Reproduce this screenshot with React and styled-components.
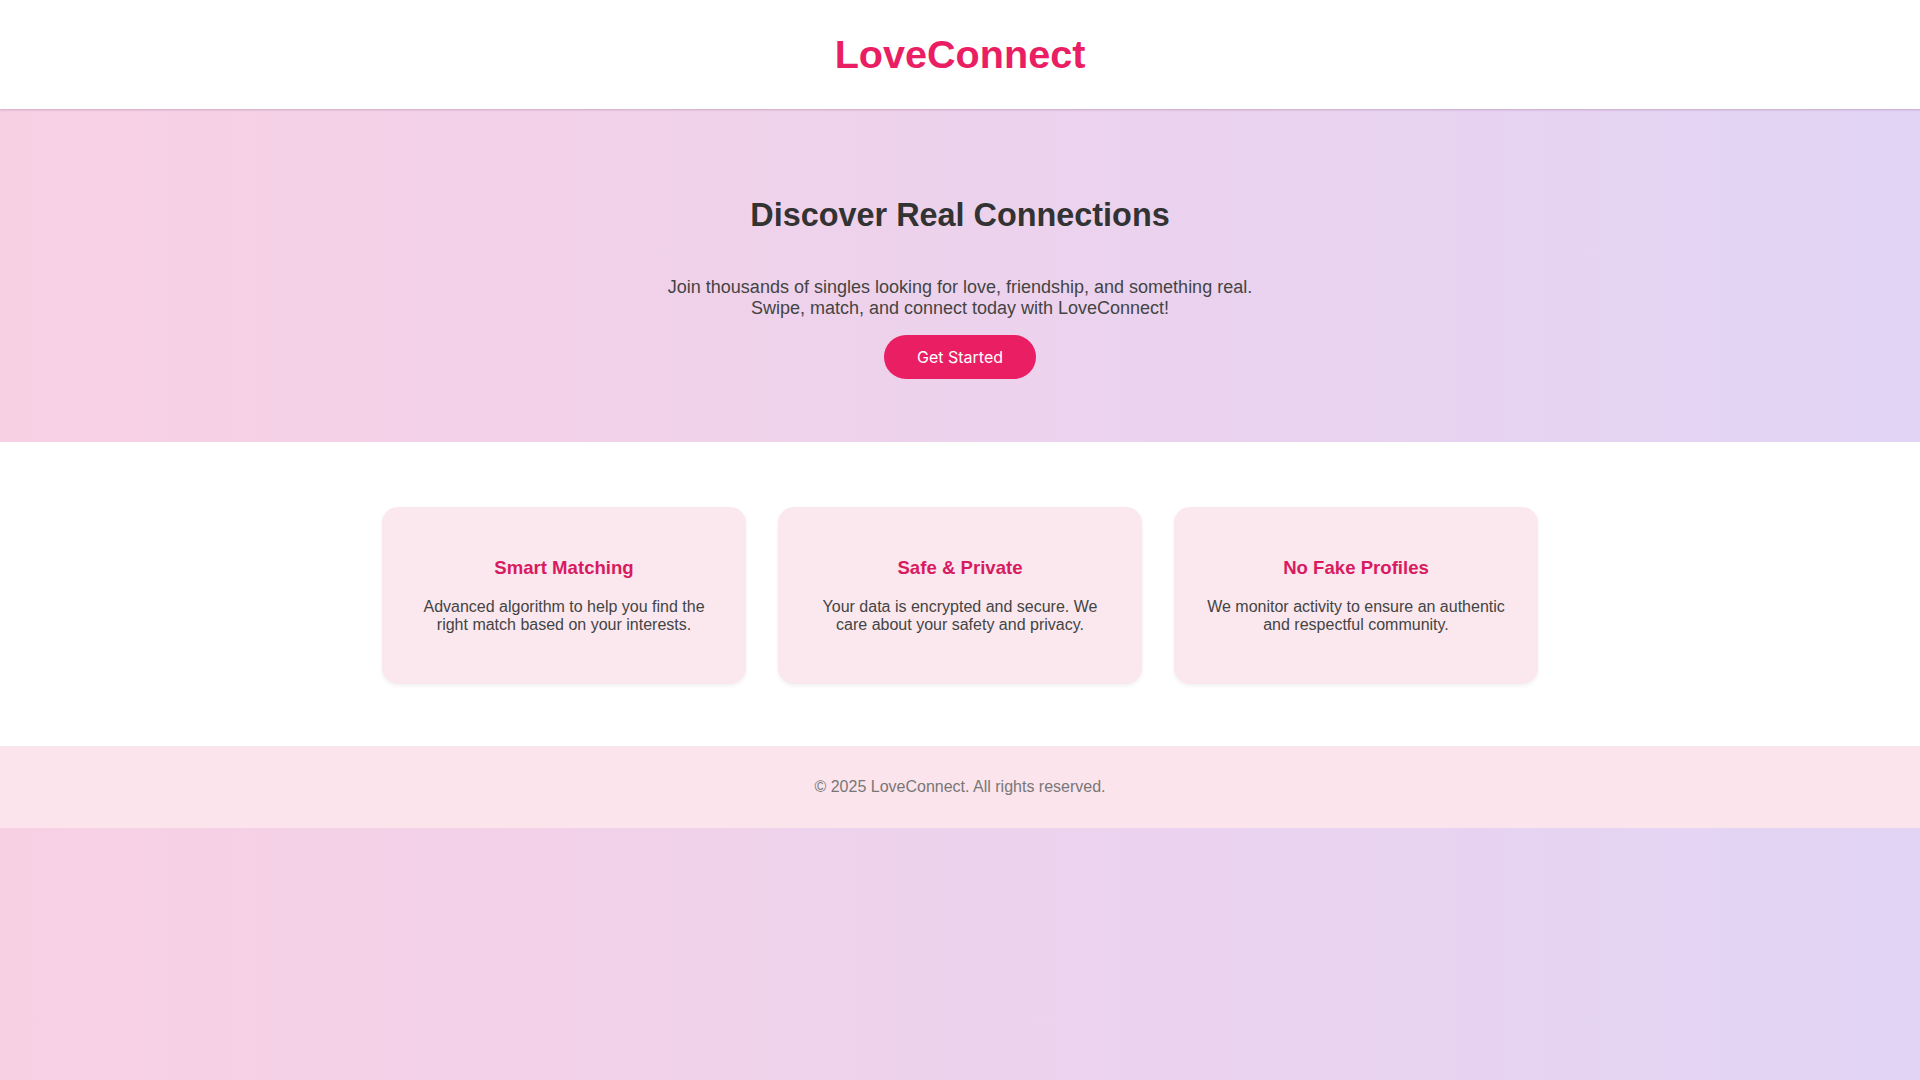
import React from 'react';
import styled, { createGlobalStyle } from 'styled-components';

const GlobalStyle = createGlobalStyle`
  html, body {
    margin: 0;
    padding: 0;
  }
  body {
    min-height: 100vh;
    font-family: "Liberation Sans", Arial, sans-serif;
    color: #333;
    background: linear-gradient(to right, #f8d0e4, #e2d4f5);
  }
`;

const Header = styled.header`
  background: #ffffff;
  padding: 31px 20px 32px;
  text-align: center;
  box-shadow: 0 1px 2px rgba(150, 90, 130, 0.35);
  position: relative;
  z-index: 1;
`;

const Logo = styled.h1`
  margin: 0;
  font-size: 39.6px;
  line-height: 46px;
  font-weight: 700;
  color: #e91e63;
`;

const Hero = styled.section`
  padding: 88px 20px 63px;
  text-align: center;
`;

const HeroTitle = styled.h2`
  margin: 0;
  font-size: 32.4px;
  line-height: 37px;
  font-weight: 700;
  color: #333;
`;

const HeroText = styled.p`
  max-width: 600px;
  margin: 43px auto 16px;
  font-size: 18px;
  line-height: 21px;
  color: #444;
`;

const PrimaryButton = styled.button`
  font-family: Inter, "Noto Sans", sans-serif;
  font-size: 16px;
  line-height: 20px;
  color: #fff;
  background: #e91e63;
  border: none;
  border-radius: 30px;
  padding: 12px 33px;
  cursor: pointer;
`;

const Features = styled.section`
  background: #ffffff;
  padding: 65px 20px 62px;
`;

const FeatureGrid = styled.div`
  max-width: 1156px;
  margin: 0 auto;
  display: grid;
  grid-template-columns: repeat(3, 1fr);
  gap: 32px;
`;

const FeatureCard = styled.div`
  background: #fae8ee;
  border-radius: 16px;
  padding: 50px 32px 49px;
  text-align: center;
  box-shadow: 0 2px 4px rgba(0, 0, 0, 0.06);
`;

const FeatureTitle = styled.h3`
  margin: 0 0 19px;
  font-size: 18.6px;
  line-height: 22px;
  font-weight: 700;
  color: #d81b60;
`;

const FeatureText = styled.p`
  margin: 0;
  font-size: 16px;
  line-height: 18.4px;
  color: #444;
`;

const Footer = styled.footer`
  background: #fce4ec;
  padding: 32px 20px 32px;
  text-align: center;
`;

const FooterText = styled.p`
  margin: 0;
  font-size: 16px;
  line-height: 18px;
  color: #777;
`;

const features = [
  {
    title: 'Smart Matching',
    text: 'Advanced algorithm to help you find the right match based on your interests.'
  },
  {
    title: 'Safe & Private',
    text: 'Your data is encrypted and secure. We care about your safety and privacy.'
  },
  {
    title: 'No Fake Profiles',
    text: 'We monitor activity to ensure an authentic and respectful community.'
  }
];

export default function App () {
  return (
    <>
      <GlobalStyle />
      <Header>
        <Logo>LoveConnect</Logo>
      </Header>
      <Hero>
        <HeroTitle>Discover Real Connections</HeroTitle>
        <HeroText>
          Join thousands of singles looking for love, friendship, and something real. Swipe, match, and connect today with LoveConnect!
        </HeroText>
        <PrimaryButton>Get Started</PrimaryButton>
      </Hero>
      <Features>
        <FeatureGrid>
          {features.map((f) => (
            <FeatureCard key={f.title}>
              <FeatureTitle>{f.title}</FeatureTitle>
              <FeatureText>{f.text}</FeatureText>
            </FeatureCard>
          ))}
        </FeatureGrid>
      </Features>
      <Footer>
        <FooterText>© 2025 LoveConnect. All rights reserved.</FooterText>
      </Footer>
    </>
  );
}
